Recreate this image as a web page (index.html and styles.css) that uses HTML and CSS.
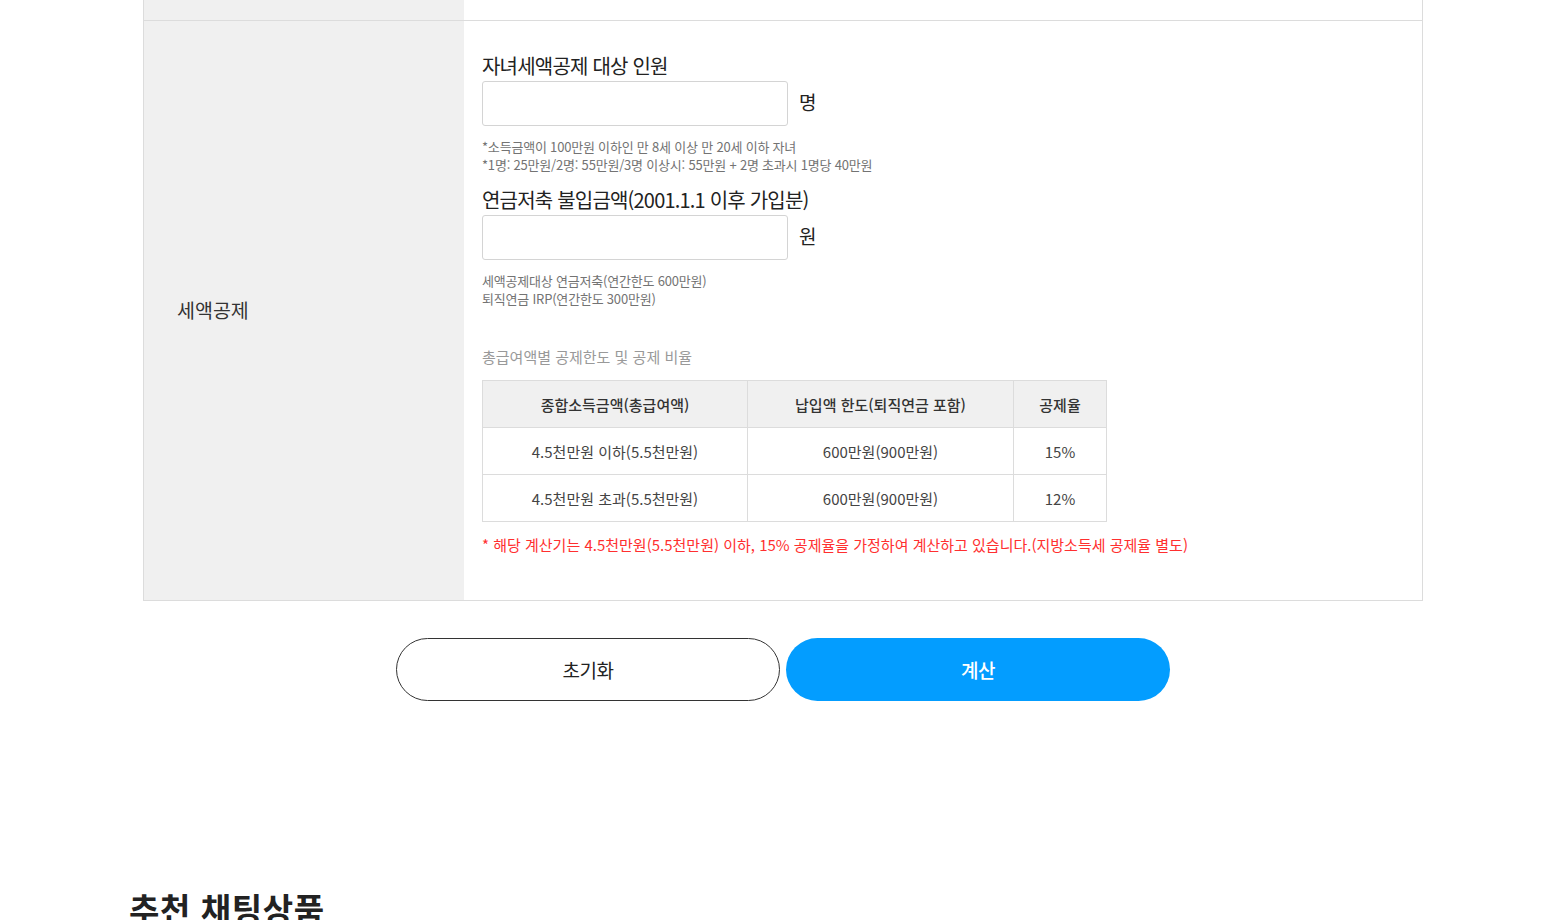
FILE: index.html
```html
<!DOCTYPE html>
<html lang="ko">
<head>
<meta charset="utf-8">
<title>세액공제 계산기</title>
<link rel="stylesheet" href="styles.css">
</head>
<body>
<div class="wrap">
  <div class="form-table">
    <div class="row row-top">
      <div class="label"></div>
      <div class="field"></div>
    </div>
    <div class="row">
      <div class="label label-main">세액공제</div>
      <div class="field field-main">
        <div class="q-title">자녀세액공제 대상 인원</div>
        <div class="input-line">
          <input class="num-input" type="text">
          <span class="unit">명</span>
        </div>
        <div class="notes">
          <p>*소득금액이 100만원 이하인 만 8세 이상 만 20세 이하 자녀</p>
          <p>*1명: 25만원/2명: 55만원/3명 이상시: 55만원 + 2명 초과시 1명당 40만원</p>
        </div>
        <div class="q-title q-second">연금저축 불입금액(2001.1.1 이후 가입분)</div>
        <div class="input-line">
          <input class="num-input" type="text">
          <span class="unit">원</span>
        </div>
        <div class="notes">
          <p>세액공제대상 연금저축(연간한도 600만원)</p>
          <p>퇴직연금 IRP(연간한도 300만원)</p>
        </div>
        <div class="sub-title">총급여액별 공제한도 및 공제 비율</div>
        <table class="rate-table">
          <colgroup>
            <col class="c1"><col class="c2"><col class="c3">
          </colgroup>
          <thead>
            <tr><th>종합소득금액(총급여액)</th><th>납입액 한도(퇴직연금 포함)</th><th>공제율</th></tr>
          </thead>
          <tbody>
            <tr><td>4.5천만원 이하(5.5천만원)</td><td>600만원(900만원)</td><td>15%</td></tr>
            <tr><td>4.5천만원 초과(5.5천만원)</td><td>600만원(900만원)</td><td>12%</td></tr>
          </tbody>
        </table>
        <p class="warn">* 해당 계산기는 4.5천만원(5.5천만원) 이하, 15% 공제율을 가정하여 계산하고 있습니다.(지방소득세 공제율 별도)</p>
      </div>
    </div>
  </div>
  <div class="btns">
    <button class="btn btn-reset" type="button">초기화</button>
    <button class="btn btn-calc" type="button">계산</button>
  </div>
</div>
<h2 class="section-title">추천 채팅상품</h2>
</body>
</html>
```

FILE: styles.css
```css
html, body {
  margin: 0;
  padding: 0;
  background: #fff;
  font-family: "Noto Sans CJK KR", "Noto Sans", sans-serif;
  color: #222;
  overflow: hidden;
  height: 920px;
}
.wrap {
  width: 1280px;
  margin-left: 143px;
}
.form-table {
  border: 1px solid #dcdcdc;
  border-top: none;
}
.row {
  display: flex;
}
.row-top {
  height: 20px;
  border-bottom: 1px solid #dcdcdc;
}
.label {
  width: 320px;
  flex: none;
  background: #f0f0f0;
}
.label-main {
  display: flex;
  align-items: center;
  padding-left: 33px;
  box-sizing: border-box;
  font-size: 19.5px;
  letter-spacing: 0;
  color: #333;
  padding-bottom: 2px;
}
.field {
  flex: 1;
}
.field-main {
  padding: 32px 0 45px 18px;
}
.q-title {
  font-size: 20px;
  line-height: 26px;
  letter-spacing: -0.8px;
  color: #222;
  margin-bottom: 2px;
}
.q-second {
  margin-top: 13px;
}
.input-line {
  display: flex;
  align-items: center;
}
.num-input {
  width: 306px;
  height: 45px;
  box-sizing: border-box;
  border: 1px solid #d4d4d4;
  border-radius: 3px;
  margin: 0;
  padding: 0 10px;
  font: inherit;
  outline: none;
}
.unit {
  margin-left: 11px;
  font-size: 19px;
  color: #222;
  position: relative;
  top: -2px;
}
.notes {
  margin-top: 12px;
}
.notes p {
  margin: 0;
  font-size: 13px;
  line-height: 18px;
  letter-spacing: -0.2px;
  color: #737373;
}
.sub-title {
  margin-top: 39px;
  font-size: 15px;
  line-height: 20px;
  letter-spacing: 0;
  color: #999;
}
.rate-table {
  margin-top: 13px;
  border-collapse: collapse;
  width: 624px;
  table-layout: fixed;
}
.rate-table .c1 { width: 265px; }
.rate-table .c2 { width: 266px; }
.rate-table .c3 { width: 93px; }
.rate-table th,
.rate-table td {
  border: 1px solid #dcdcdc;
  height: 46px;
  padding: 0;
  text-align: center;
  font-size: 15px;
  letter-spacing: 0;
}
.rate-table th {
  background: #f0f0f0;
  font-weight: 500;
  color: #333;
}
.rate-table td {
  color: #444;
}
.warn {
  margin: 13px 0 0;
  font-size: 15px;
  line-height: 20px;
  letter-spacing: 0;
  color: #ff2f2f;
}
.btns {
  display: flex;
  justify-content: center;
  gap: 6px;
  margin-top: 37px;
}
.btn {
  width: 384px;
  height: 63px;
  border-radius: 32px;
  font-family: inherit;
  font-size: 19px;
  letter-spacing: -0.5px;
  cursor: pointer;
  margin: 0;
}
.btn-reset {
  background: #fff;
  border: 1px solid #333;
  color: #222;
}
.btn-calc {
  background: #039dff;
  border: none;
  color: #fff;
  font-weight: 500;
}
.section-title {
  margin: 187px 0 0 129px;
  font-size: 33px;
  font-weight: 700;
  letter-spacing: 0.6px;
  color: #222;
  line-height: 40px;
}
```
